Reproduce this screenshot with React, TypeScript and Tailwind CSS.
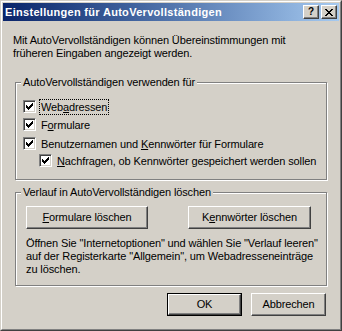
import React from "react";

function Check() {
  // classic 7x7 check glyph
  return (
    <svg width="7" height="7" viewBox="0 0 7 7" shapeRendering="crispEdges" className="block">
      <path d="M0 2h1v3H0zM1 3h1v3H1zM2 4h1v3H2zM3 3h1v3H3zM4 2h1v3H4zM5 1h1v3H5zM6 0h1v3H6z" fill="#000" />
    </svg>
  );
}

function CheckBox() {
  return (
    <div className="w-[13px] h-[13px] shrink-0 bg-white border border-t-[#808080] border-l-[#808080] border-b-white border-r-white shadow-[inset_1px_1px_0_#404040,inset_-1px_-1px_0_#d4d0c8] flex items-center justify-center">
      <Check />
    </div>
  );
}

function Row({ children, focus, indent }: { children: React.ReactNode; focus?: boolean; indent?: boolean }) {
  return (
    <div className={`flex items-center h-[13px] ${indent ? "ml-[16px]" : ""}`}>
      <CheckBox />
      <span
        className={`ml-[3px] px-[1px] leading-[14px] border border-dotted ${focus ? "border-black" : "border-transparent"}`}
      >
        {children}
      </span>
    </div>
  );
}

function Btn({ children, def, className = "" }: { children: React.ReactNode; def?: boolean; className?: string }) {
  return (
    <div className={`${def ? "border border-black" : ""} ${className}`}>
      <div className="h-full flex items-center justify-center bg-[#d4d0c8] border border-t-white border-l-white border-b-[#404040] border-r-[#404040] shadow-[inset_-1px_-1px_0_#808080]">
        {children}
      </div>
    </div>
  );
}

function Group({ title, className = "", children }: { title: string; className?: string; children: React.ReactNode }) {
  return (
    <div className={`relative border border-[#808080] shadow-[inset_1px_1px_0_#fff,1px_1px_0_#fff] ${className}`}>
      <span className="absolute -top-[8px] left-[5px] px-[2px] bg-[#d4d0c8] leading-[14px]">{title}</span>
      {children}
    </div>
  );
}

export default function App() {
  const u = (s: string) => <span className="underline underline-offset-[1px]">{s}</span>;
  return (
    <div className="w-[342px] h-[331px] bg-[#d4d0c8] text-[11px] tracking-[-0.12px] text-black font-['Liberation_Sans',Arial,sans-serif] border border-t-[#d4d0c8] border-l-[#d4d0c8] border-b-[#404040] border-r-[#404040]">
      <div className="h-full border border-t-white border-l-white border-b-[#808080] border-r-[#808080] p-[1px] flex flex-col">
        {/* title bar */}
        <div className="h-[18px] shrink-0 flex items-center bg-gradient-to-r from-[#0a246a] to-[#a6caf0]">
          <span className="ml-[2px] font-bold text-white text-[11px] tracking-[0.3px] leading-none">Einstellungen für AutoVervollständigen</span>
          <div className="ml-auto mr-[2px] flex gap-[2px]">
            <Btn className="w-[16px] h-[14px]">
              <span className="font-bold text-[10px] leading-none">?</span>
            </Btn>
            <Btn className="w-[16px] h-[14px]">
              <svg width="8" height="7" viewBox="0 0 8 7" shapeRendering="crispEdges">
                <path d="M0 0h2v1H0zM6 0h2v1H6zM1 1h2v1H1zM5 1h2v1H5zM2 2h4v1H2zM3 3h2v1H3zM2 4h4v1H2zM1 5h2v1H1zM5 5h2v1H5zM0 6h2v1H0zM6 6h2v1H6z" fill="#000" />
              </svg>
            </Btn>
          </div>
        </div>

        <div className="px-[10px] pt-[13px] leading-[13px]">
          <p>
            Mit AutoVervollständigen können Übereinstimmungen mit
            <br />
            früheren Eingaben angezeigt werden.
          </p>

          <Group title="AutoVervollständigen verwenden für" className="mt-[22px] ml-[2px] w-[312px] h-[98px]">
            <div className="pt-[17px] pl-[7px] flex flex-col">
              <Row focus>Web{u("a")}dressen</Row>
              <div className="mt-[5px]">
                <Row>F{u("o")}rmulare</Row>
              </div>
              <div className="mt-[6px]">
                <Row>Benutzernamen und {u("K")}ennwörter für Formulare</Row>
              </div>
              <div className="mt-[4px]">
                <Row indent>{u("N")}achfragen, ob Kennwörter gespeichert werden sollen</Row>
              </div>
            </div>
          </Group>

          <Group title="Verlauf in AutoVervollständigen löschen" className="mt-[12px] ml-[2px] w-[312px] h-[94px]">
            <div className="pt-[13px] pl-[10px] flex flex-col">
              <div className="flex">
                <Btn className="w-[122px] h-[23px]">{u("F")}ormulare löschen</Btn>
                <Btn className="ml-[40px] w-[123px] h-[23px]">K{u("e")}nnwörter löschen</Btn>
              </div>
              <p className="mt-[8px]">
                Öffnen Sie "Internetoptionen" und wählen Sie "Verlauf leeren"
                <br />
                auf der Registerkarte "Allgemein", um Webadresseneinträge
                <br />
                zu löschen.
              </p>
            </div>
          </Group>

          <div className="mt-[7px] mr-[3px] flex justify-end gap-[9px]">
            <Btn def className="w-[75px] h-[23px]">OK</Btn>
            <Btn className="w-[75px] h-[23px]">Abbrechen</Btn>
          </div>
        </div>
      </div>
    </div>
  );
}
